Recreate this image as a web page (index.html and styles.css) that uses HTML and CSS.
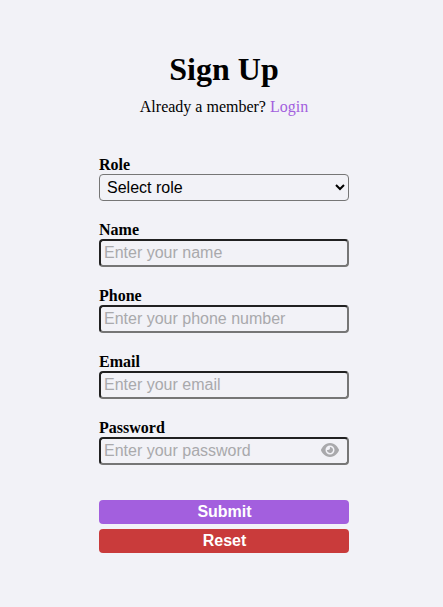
FILE: index.html
```html
<!DOCTYPE html>
<html lang="en">
<head>
<meta charset="utf-8">
<title>Sign Up</title>
<link rel="stylesheet" href="styles.css">
</head>
<body>
<main class="signup">
  <h1 class="title">Sign Up</h1>
  <p class="subtitle">Already a member? <a class="login" href="#">Login</a></p>
  <form class="form">
    <div class="field field-role">
      <label for="role">Role</label>
      <select id="role"><option>Select role</option></select>
    </div>
    <div class="field">
      <label for="name">Name</label>
      <input id="name" type="text" placeholder="Enter your name">
    </div>
    <div class="field">
      <label for="phone">Phone</label>
      <input id="phone" type="text" placeholder="Enter your phone number">
    </div>
    <div class="field">
      <label for="email">Email</label>
      <input id="email" type="email" placeholder="Enter your email">
    </div>
    <div class="field">
      <label for="password">Password</label>
      <div class="password">
        <input id="password" type="password" placeholder="Enter your password">
        <svg class="eye" viewBox="0 0 576 512"><path d="M288 32c-80.8 0-145.5 36.8-192.6 80.6C48.6 156 17.3 208 2.5 243.7c-3.3 7.9-3.3 16.7 0 24.6C17.3 304 48.6 356 95.4 399.4C142.5 443.2 207.2 480 288 480s145.5-36.8 192.6-80.6c46.8-43.5 78.1-95.4 93-131.1c3.3-7.9 3.3-16.7 0-24.6c-14.9-35.7-46.2-87.7-93-131.1C433.5 68.8 368.8 32 288 32zM144 256a144 144 0 1 1 288 0 144 144 0 1 1-288 0zm144-64c0 35.3-28.7 64-64 64c-7.1 0-13.9-1.2-20.3-3.3c-5.5-1.8-11.9 1.6-11.7 7.4c.3 6.9 1.3 13.8 3.2 20.7c13.7 51.2 66.4 81.6 117.6 67.9s81.6-66.4 67.9-117.6c-11.1-41.5-47.8-69.4-88.6-71.1c-5.8-.2-9.2 6.1-7.4 11.7c2.1 6.4 3.3 13.2 3.3 20.3z"/></svg>
      </div>
    </div>
    <div class="actions">
      <button class="btn submit" type="submit">Submit</button>
      <button class="btn reset" type="reset">Reset</button>
    </div>
  </form>
</main>
</body>
</html>
```

FILE: styles.css
```css
* { box-sizing: border-box; }

body {
  margin: 0;
  background: #f2f2f7;
  color: #000;
  font-family: "Liberation Serif", "Times New Roman", serif;
  font-size: 16px;
}

.signup {
  width: 250px;
  margin-left: 99px;
  padding-top: 51px;
}

.title {
  margin: 0;
  font-size: 32px;
  line-height: 37px;
  text-align: center;
}

.subtitle {
  margin: 10px 0 0;
  line-height: 18px;
  text-align: center;
}

.login { color: #a35fde; text-decoration: none; }

.form { margin-top: 40px; }

.field {
  display: flex;
  flex-direction: column;
  height: 46px;
  margin-bottom: 20px;
}

.field-role { margin-bottom: 19px; }

label {
  height: 18px;
  line-height: 18px;
  font-weight: bold;
}

input, select {
  width: 100%;
  height: 28px;
  border-radius: 4px;
  background: transparent;
  font: 16px "Liberation Sans", Arial, sans-serif;
}

input {
  display: block;
  padding: 1px 3px;
  border: 2px inset #767676;
}

input::placeholder { color: #a9a9ac; }

select {
  height: 27px;
  padding: 0 3px;
  border: 1px solid #767676;
  color: #000;
}

.password { position: relative; }

.eye {
  position: absolute;
  top: 5px;
  right: 10px;
  width: 18px;
  height: 16px;
  fill: #a9a9ac;
}

.actions {
  display: flex;
  flex-direction: column;
  gap: 5px;
  margin-top: 35px;
}

.btn {
  height: 24px;
  padding: 0 0 0 1px;
  border: 0;
  border-radius: 4px;
  color: #fff;
  font: bold 16px/24px "Liberation Sans", Arial, sans-serif;
}

.submit { background: #a35fde; }
.reset { background: #c93b3b; }
```
